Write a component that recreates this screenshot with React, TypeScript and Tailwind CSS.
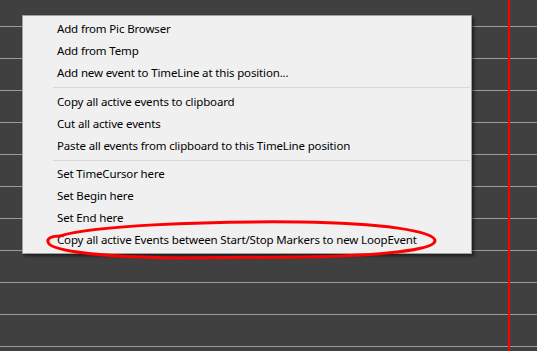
const groups = [
  ["Add from Pic Browser", "Add from Temp", "Add new event to TimeLine at this position..."],
  [
    "Copy all active events to clipboard",
    "Cut all active events",
    "Paste all events from clipboard to this TimeLine position",
  ],
  [
    "Set TimeCursor here",
    "Set Begin here",
    "Set End here",
    "Copy all active Events between Start/Stop Markers to new LoopEvent",
  ],
];

const MenuItem = ({ label }: { label: string }) => (
  <div className="h-[22px] flex items-center pl-[34px] text-[11.5px] tracking-[-0.15px] text-black whitespace-nowrap">
    {label}
  </div>
);

export default function App() {
  return (
    <div
      className="relative w-[537px] h-[351px] overflow-hidden bg-[#404040]"
      style={{ fontFamily: '"Noto Sans", "Open Sans", sans-serif' }}
    >
      {/* timeline rows */}
      <div className="flex flex-col pt-[26px]">
        {Array.from({ length: 11 }).map((_, i) => (
          <div key={i} className="h-[32px] shrink-0 border-t border-[#9a9a9a]" />
        ))}
      </div>

      {/* time cursor */}
      <div className="absolute top-0 bottom-0 left-[508px] w-[2px] bg-[#ff0000]" />

      {/* context menu */}
      <div className="absolute left-[22px] top-[15px] w-[450px] bg-[#f0f0f0] border border-[#a0a0a0] shadow-[2px_2px_3px_rgba(0,0,0,0.55)] pt-[2px] pb-[2px]">
        {groups.map((g, gi) => (
          <div key={gi}>
            {gi > 0 && (
              <div className={gi === 1 ? "h-[7px] flex items-center" : "h-[6px] flex items-center"}>
                <div className="ml-[30px] mr-[1px] flex-1 h-px bg-[#d7d7d7]" />
              </div>
            )}
            {g.map((label) => (
              <MenuItem key={label} label={label} />
            ))}
          </div>
        ))}
      </div>

      {/* hand-drawn highlight */}
      <svg className="absolute left-0 top-0" width="537" height="351">
        <path
          d="M 60 236 C 90 226, 200 221, 300 222 C 380 223, 436 231, 435 241 C 434 250, 380 256, 300 257 L 180 258 C 110 257, 50 252, 48 242 C 47 238, 52 236, 60 236 Z"
          fill="none"
          stroke="#ff0000"
          strokeWidth="3"
        />
      </svg>
    </div>
  );
}
